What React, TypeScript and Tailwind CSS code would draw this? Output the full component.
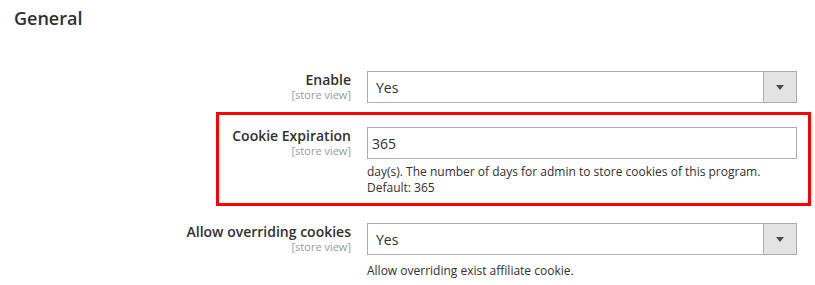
import React from "react";

/*
  Affiliate settings — "General" group with a highlighted Cookie Expiration row.
*/

const font = { fontFamily: '"Open Sans", "Noto Sans", sans-serif' };

function Label({ text, width }: { text: string; width: string }) {
  return (
    <div className={`${width} shrink-0 pt-[1px] flex flex-col items-end text-right`}>
      <span className="text-[14px] leading-[16px] font-semibold text-[#303030]">
        {text}
      </span>
      <span className="text-[11px] leading-[13px] text-[#999999]">
        [store view]
      </span>
    </div>
  );
}

function Select({ value }: { value: string }) {
  return (
    <div className="flex h-[32px] w-[430px] border border-[#adadad] bg-white">
      <div className="flex-1 flex items-center pl-[8px] text-[14px] text-[#303030]">
        {value}
      </div>
      <div className="w-[33px] flex items-center justify-center bg-[#e3e3e3] border-l border-[#adadad]">
        <span className="block w-0 h-0 border-l-[4px] border-r-[4px] border-t-[5px] border-l-transparent border-r-transparent border-t-[#514943]" />
      </div>
    </div>
  );
}

export default function App() {
  return (
    <div className="w-[815px] h-[285px] bg-white pt-[6px]" style={font}>
      <h2 className="pl-[14px] text-[18px] leading-[24px] font-semibold text-[#303030]">
        General
      </h2>

      {/* Enable */}
      <div className="mt-[41px] flex gap-[16px]">
        <Label text="Enable" width="w-[351px]" />
        <Select value="Yes" />
      </div>

      {/* Cookie Expiration (highlighted) */}
      <div className="mt-[9px] ml-[216px] w-[595px] border-[3px] border-[#ff0000] pt-[12px] pb-[7px]">
        <div className="flex gap-[16px]">
          <Label text="Cookie Expiration" width="w-[132px]" />
          <div className="w-[430px]">
            <div className="h-[32px] border border-[#adadad] flex items-center pl-[4px] text-[14px] text-[#303030]">
              365
            </div>
            <p className="mt-[5px] text-[12px] leading-[16px] text-[#303030]">
              day(s). The number of days for admin to store cookies of this program.
              <br />
              Default: 365
            </p>
          </div>
        </div>
      </div>

      {/* Allow overriding cookies */}
      <div className="mt-[17px] flex gap-[16px]">
        <Label text="Allow overriding cookies" width="w-[351px]" />
        <div className="w-[430px]">
          <Select value="Yes" />
          <p className="mt-[8px] text-[12px] leading-[16px] text-[#303030]">
            Allow overriding exist affiliate cookie.
          </p>
        </div>
      </div>
    </div>
  );
}
